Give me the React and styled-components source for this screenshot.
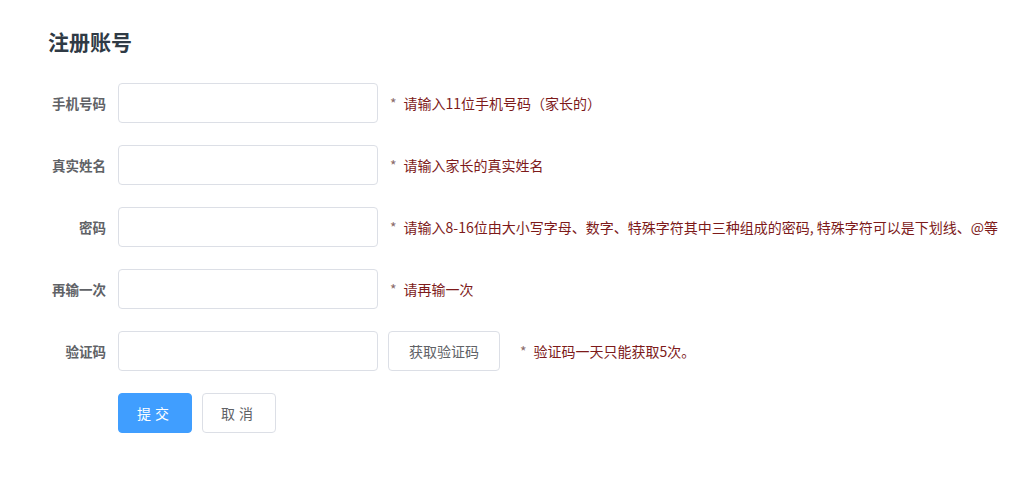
import React from 'react';
import styled, { createGlobalStyle } from 'styled-components';

const GlobalStyle = createGlobalStyle`
  body {
    margin: 0;
    background: #fff;
    font-family: "Noto Sans CJK SC", "Noto Sans", sans-serif;
  }
`;

const Page = styled.div`
  padding: 27px 0 0 48px;
`;

const Title = styled.h2`
  margin: 0 0 27px 0;
  font-size: 21px;
  line-height: 29px;
  font-weight: 700;
  color: #2f3a45;
`;

const Row = styled.div`
  display: flex;
  align-items: center;
  height: 40px;
  margin-bottom: 22px;
`;

const Label = styled.label`
  width: 70px;
  box-sizing: border-box;
  padding-right: 12px;
  text-align: right;
  font-size: 13.5px;
  font-weight: 700;
  color: #606266;
  white-space: nowrap;
`;

const Input = styled.input`
  width: 260px;
  height: 40px;
  box-sizing: border-box;
  border: 1px solid #dcdfe6;
  border-radius: 4px;
  padding: 0 12px;
  font-size: 14px;
  outline: none;
`;

const Hint = styled.span`
  margin-left: ${({ $gap }) => $gap || 12}px;
  font-size: 14px;
  color: #7d1a1a;
  white-space: nowrap;
`;

const Star = styled.span`
  color: #8a6a6a;
  margin-right: 7px;
`;

const Button = styled.button`
  height: 40px;
  width: ${({ $w }) => $w}px;
  margin-left: ${({ $ml }) => $ml || 0}px;
  box-sizing: border-box;
  border-radius: 4px;
  font-family: inherit;
  font-size: 14px;
  letter-spacing: ${({ $ls }) => $ls || 0}px;
  cursor: pointer;
  border: 1px solid ${({ $primary }) => ($primary ? '#409eff' : '#dcdfe6')};
  background: ${({ $primary }) => ($primary ? '#409eff' : '#fff')};
  color: ${({ $primary }) => ($primary ? '#fff' : '#606266')};
`;

const Actions = styled.div`
  display: flex;
  padding-left: 70px;
`;

const fields = [
  { label: '手机号码', hint: '请输入11位手机号码（家长的）' },
  { label: '真实姓名', hint: '请输入家长的真实姓名' },
  {
    label: '密码',
    hint: '请输入8-16位由大小写字母、数字、特殊字符其中三种组成的密码, 特殊字符可以是下划线、@等',
  },
  { label: '再输一次', hint: '请再输一次' },
];

const App = () => {
  return (
    <Page>
      <GlobalStyle />
      <Title>注册账号</Title>
      {fields.map((f) => (
        <Row key={f.label}>
          <Label>{f.label}</Label>
          <Input type={f.label.includes('密码') || f.label === '再输一次' ? 'password' : 'text'} />
          <Hint>
            <Star>*</Star>
            {f.hint}
          </Hint>
        </Row>
      ))}
      <Row>
        <Label>验证码</Label>
        <Input />
        <Button $w={112} $ml={10}>获取验证码</Button>
        <Hint $gap={20}>
          <Star>*</Star>
          验证码一天只能获取5次。
        </Hint>
      </Row>
      <Actions>
        <Button $primary $w={74} $ls={4}>提交</Button>
        <Button $w={74} $ml={10} $ls={4}>取消</Button>
      </Actions>
    </Page>
  );
};

export default App;
